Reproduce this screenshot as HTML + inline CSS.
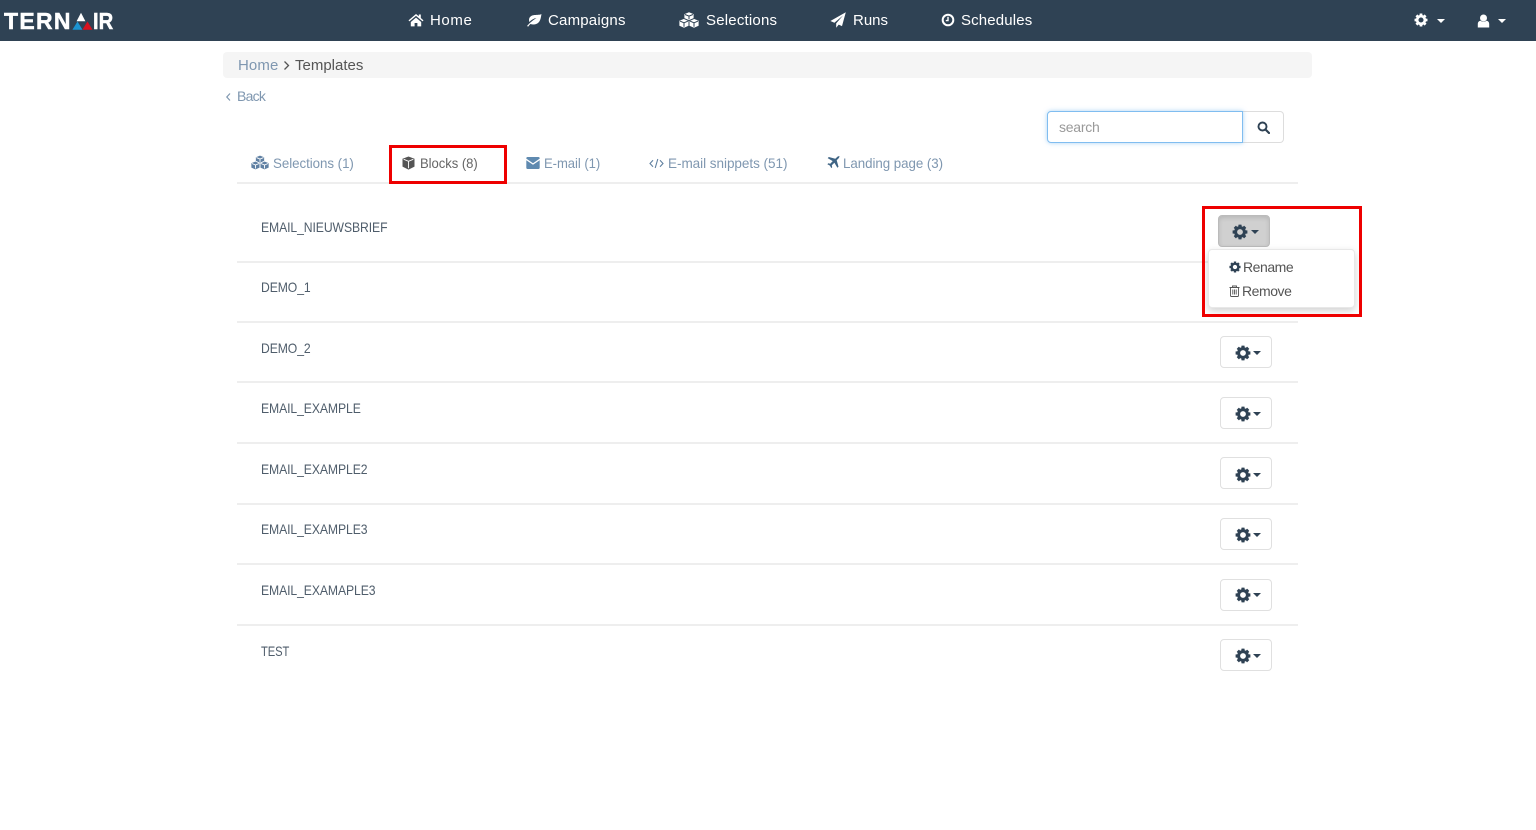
<!DOCTYPE html>
<html lang="en">
<head>
<meta charset="utf-8">
<title>Templates</title>
<style>
*{box-sizing:border-box}
html,body{margin:0;padding:0;width:1536px;height:830px;overflow:hidden;background:#fff}
body{font-family:"Liberation Sans",sans-serif;font-size:14px;color:#555;position:relative}
.t{position:absolute;white-space:nowrap;line-height:20px;transform-origin:0 50%}
.i{position:absolute;display:block}
nav{position:absolute;left:0;top:0;width:1536px;height:41px;background:#2f4254}
.nv{color:#fff;font-size:15px;letter-spacing:.2px;top:10.500px}
.line{position:absolute;left:237px;width:1061px;height:2px;background:#eeeeee}
.row{color:#4f5d6b;font-size:14px;letter-spacing:-.1px;transform:scaleX(.87)}
.btn{position:absolute;width:52px;height:32px;border:1px solid #e0e0e0;border-radius:4px;background:#fff;color:#2f4254}
.car{position:absolute;width:0;height:0;border-left:4px solid transparent;border-right:4px solid transparent;border-top:4px solid currentColor}
.tab{color:#7f97b0;font-size:14px;letter-spacing:-.05px;top:152.500px}
</style>
</head>
<body>
<svg width="0" height="0" style="position:absolute">
<defs>
<symbol id="cog" viewBox="0 0 16 16">
<circle cx="8" cy="8" r="4.400" fill="none" stroke="currentColor" stroke-width="3"/>
<g fill="currentColor">
<rect x="6.400" y="0.600" width="3.200" height="3" rx=".4"/>
<rect x="6.400" y="12.400" width="3.200" height="3" rx=".4"/>
<rect x="0.600" y="6.400" width="3" height="3.200" rx=".4"/>
<rect x="12.400" y="6.400" width="3" height="3.200" rx=".4"/>
<rect x="6.400" y="0.600" width="3.200" height="3" rx=".4" transform="rotate(45 8 8)"/>
<rect x="6.400" y="12.400" width="3.200" height="3" rx=".4" transform="rotate(45 8 8)"/>
<rect x="0.600" y="6.400" width="3" height="3.200" rx=".4" transform="rotate(45 8 8)"/>
<rect x="12.400" y="6.400" width="3" height="3.200" rx=".4" transform="rotate(45 8 8)"/>
</g>
</symbol>
<symbol id="cubes" viewBox="0 0 20 16">
<g fill="currentColor">
<path d="M10 0.300l4.600 1.800v4.700L10 8.700 5.400 6.800V2.100z"/>
<path d="M5 6.900l4.600 1.800v5L5 15.700.4 13.700v-5z"/>
<path d="M15 6.900l4.600 1.800v5L15 15.700l-4.600-2v-5z"/>
</g>
<g style="stroke:var(--b)" stroke-width="1" fill="none">
<path d="M6 2.500L10 4.100l4-1.600M10 4.100v3.200"/>
<path d="M5.200 6.600L10 8.700l4.800-2.100"/>
<path d="M1 9.100L5 10.800l4-1.700M5 10.800v3.900"/>
<path d="M11 9.100l4 1.700 4-1.700M15 10.800v3.900"/>
<path d="M10 8.500v6"/>
</g>
</symbol>
</defs>
</svg>

<nav></nav>

<!-- logo -->
<div class="t" style="left:4px;top:9.500px;font-size:23px;line-height:23px;font-weight:700;color:#fff;letter-spacing:1.300px;-webkit-text-stroke:.5px #fff">TERN</div>
<svg class="i" style="left:72px;top:12px" width="21" height="18" viewBox="0 0 21 18">
<path d="M9 0.800l4.400 8.400H4.600z" fill="#fff"/>
<path d="M5.500 9.500l5 8.200H.4z" fill="#1c93d1"/>
<path d="M15.500 9.500l5 8.200H10.400z" fill="#d8121f"/>
</svg>
<div class="t" style="left:93px;top:9.500px;font-size:23px;line-height:23px;font-weight:700;color:#fff;-webkit-text-stroke:.5px #fff;transform:scaleX(.88)">IR</div>

<!-- nav items -->
<svg class="i" style="left:408px;top:13px" width="16" height="14" viewBox="0 0 16 14"><path fill="#fff" d="M8 1L.5 7.400l.9 1L8 2.900l6.600 5.500.9-1L12.800 5V1.500h-2v1.800zM2.800 9L8 4.600 13.200 9v4.400H9.400V10H6.600v3.400H2.800z"/></svg>
<div class="t nv" style="left:430px;letter-spacing:.6px">Home</div>
<svg class="i" style="left:526px;top:13px" width="16" height="14" viewBox="0 0 16 14"><path fill="#fff" d="M15.500 1c-1.500 1-4 .8-7 1C5 2.300 3 4.300 3 7c0 .8.200 1.400.4 2C5 7 7.500 5.500 10.500 5 8 6.500 4.500 9 1 13l1.200.6C3 12.500 3.700 11.600 4.500 11c3 1 6.500.5 8.500-2 2-2.600 2-6 2.500-8z"/></svg>
<div class="t nv" style="left:548px">Campaigns</div>
<svg class="i" style="left:679px;top:12px;color:#fff;--b:#2f4254" width="20" height="16"><use href="#cubes"/></svg>
<div class="t nv" style="left:706px">Selections</div>
<svg class="i" style="left:830px;top:12px" width="16" height="16" viewBox="0 0 16 16"><path fill="#fff" d="M15.800.2L.4 9l4 1.700L13 3.500 6.200 11.400V15.800l2.500-3.200 3.300 1.500z"/></svg>
<div class="t nv" style="left:853px;letter-spacing:0">Runs</div>
<svg class="i" style="left:941px;top:13px" width="14" height="14" viewBox="0 0 14 14"><circle cx="7" cy="7" r="5.300" fill="none" stroke="#fff" stroke-width="2"/><path d="M7 3.800V7.600H4.800" fill="none" stroke="#fff" stroke-width="1.400"/></svg>
<div class="t nv" style="left:961px;letter-spacing:.15px">Schedules</div>

<svg class="i" style="left:1414px;top:13px;color:#fff" width="14" height="14"><use href="#cog"/></svg>
<span class="car" style="left:1437px;top:19px;color:#fff;border-left-width:4.500px;border-right-width:4.500px"></span>
<svg class="i" style="left:1477px;top:14px" width="13" height="14" viewBox="0 0 13 14"><circle cx="6.500" cy="4" r="3.500" fill="#fff"/><path d="M.8 13.500V10c0-2 1.400-3.200 2.900-3.200.8.700 1.700 1 2.800 1s2-.3 2.800-1c1.500 0 2.900 1.200 2.900 3.200v3.500z" fill="#fff"/></svg>
<span class="car" style="left:1498px;top:19px;color:#fff;border-left-width:4.500px;border-right-width:4.500px"></span>

<!-- breadcrumb -->
<div style="position:absolute;left:223px;top:52px;width:1089px;height:26px;background:#f5f5f5;border-radius:4px"></div>
<div class="t" style="left:238px;top:56px;font-size:15px;letter-spacing:.1px;color:#7f97b0">Home</div>
<svg class="i" style="left:283px;top:60px" width="7" height="11" viewBox="0 0 7 11"><path d="M1.500 1.500L5.500 5.500 1.500 9.500" fill="none" stroke="#555" stroke-width="1.300"/></svg>
<div class="t" style="left:295px;top:56px;font-size:15px;color:#555">Templates</div>

<!-- back -->
<svg class="i" style="left:225px;top:92px" width="7" height="10" viewBox="0 0 7 10"><path d="M5 1.500L1.800 5 5 8.500" fill="none" stroke="#7f97b0" stroke-width="1.200"/></svg>
<div class="t" style="left:237px;top:86px;color:#7f97b0;font-size:14px;letter-spacing:-.75px">Back</div>

<!-- search -->
<div style="position:absolute;left:1243px;top:111px;width:41px;height:32px;border:1px solid #ddd;border-left:0;border-radius:0 4px 4px 0;background:#fff"></div>
<div style="position:absolute;left:1047px;top:111px;width:196px;height:32px;border:1px solid #80bdf0;border-radius:4px 0 0 4px;box-shadow:0 0 5px rgba(102,175,233,.55);background:#fff"></div>
<div class="t" style="left:1059px;top:117px;color:#999;font-size:14px;letter-spacing:-.25px">search</div>
<svg class="i" style="left:1257px;top:121px" width="13" height="13" viewBox="0 0 13 13"><circle cx="5.500" cy="5.500" r="4" fill="none" stroke="#2f4254" stroke-width="1.900"/><path d="M8.500 8.500L12 12" stroke="#2f4254" stroke-width="2.200" stroke-linecap="round"/></svg>

<!-- tabs -->
<div class="line" style="top:182px"></div>
<svg class="i" style="left:251px;top:155px;color:#5f80a3;--b:#fff" width="18" height="15"><use href="#cubes"/></svg>
<div class="t tab" style="left:273px;transform:scaleX(.952)">Selections (1)</div>

<svg class="i" style="left:402px;top:156px" width="13" height="14" viewBox="0 0 13 14"><path fill="#555" d="M6.500.5l6 2.300v7.800l-6 3-6-3V2.800z"/><path d="M1.700 3.300l4.800 2 4.800-2M6.500 5.300v7" stroke="#fff" stroke-width=".9" fill="none"/></svg>
<div class="t tab" style="left:420px;color:#666;transform:scaleX(.935)">Blocks (8)</div>
<div style="position:absolute;left:389px;top:145px;width:118px;height:39px;border:3px solid #ee0000"></div>

<svg class="i" style="left:526px;top:157px" width="14" height="12" viewBox="0 0 14 12"><path fill="#5f8ab0" d="M.3 1.200C.3.500.8 0 1.500 0h11c.7 0 1.200.5 1.200 1.200v.4L7 6.200.3 1.600zM.3 3.200L7 7.800l6.700-4.600v7.600c0 .7-.5 1.200-1.200 1.200h-11c-.7 0-1.200-.5-1.200-1.200z"/></svg>
<div class="t tab" style="left:544px;transform:scaleX(.933)">E-mail (1)</div>

<svg class="i" style="left:649px;top:158px" width="15" height="11" viewBox="0 0 15 11"><path d="M4 2.200L1 5.500l3 3.300M11 2.200l3 3.300-3 3.300M8.800 1L6.200 10" fill="none" stroke="#5f7f9f" stroke-width="1.100"/></svg>
<div class="t tab" style="left:668px;transform:scaleX(.967)">E-mail snippets (51)</div>

<svg class="i" style="left:827px;top:156px" width="13" height="13" viewBox="0 0 13 13"><path fill="#3f6484" d="M12.700.3c-.6-.5-1.800-.1-2.800.9L8.300 2.800 1.800 1 .7 2.100l5 3L3.200 7.700 1.300 7.300.4 8.200l2.500 1.400 1.400 2.500.9-.9-.4-1.900 2.600-2.500 3 5 1.100-1.100-1.800-6.500 1.600-1.600c1-1 1.400-2.200.9-2.800z"/></svg>
<div class="t tab" style="left:843px;transform:scaleX(.952)">Landing page (3)</div>

<!-- rows -->
<div class="t row" style="left:260.500px;top:217px">EMAIL_NIEUWSBRIEF</div>
<div class="line" style="top:261px"></div>
<div class="t row" style="left:260.500px;top:277px">DEMO_1</div>
<div class="line" style="top:321px"></div>
<div class="t row" style="left:260.500px;top:338px">DEMO_2</div>
<div class="line" style="top:381px"></div>
<div class="t row" style="left:260.500px;top:398px">EMAIL_EXAMPLE</div>
<div class="line" style="top:442px"></div>
<div class="t row" style="left:260.500px;top:459px">EMAIL_EXAMPLE2</div>
<div class="line" style="top:503px"></div>
<div class="t row" style="left:260.500px;top:519px">EMAIL_EXAMPLE3</div>
<div class="line" style="top:563px"></div>
<div class="t row" style="left:260.500px;top:580px">EMAIL_EXAMAPLE3</div>
<div class="line" style="top:624px"></div>
<div class="t row" style="left:260.500px;top:641px;transform:scaleX(.8)">TEST</div>

<!-- buttons -->
<div class="btn" style="left:1218px;top:215px;background:#d0d0d0;border-color:#bbb;box-shadow:inset 0 2px 4px rgba(0,0,0,.12)">
<svg class="i" style="left:13px;top:8px" width="16" height="16"><use href="#cog"/></svg><span class="car" style="left:32px;top:14px"></span></div>
<div class="btn" style="left:1220px;top:336px"><svg class="i" style="left:14px;top:8px" width="16" height="16"><use href="#cog"/></svg><span class="car" style="left:32px;top:14px"></span></div>
<div class="btn" style="left:1220px;top:397px"><svg class="i" style="left:14px;top:8px" width="16" height="16"><use href="#cog"/></svg><span class="car" style="left:32px;top:14px"></span></div>
<div class="btn" style="left:1220px;top:457px"><svg class="i" style="left:14px;top:9px" width="16" height="16"><use href="#cog"/></svg><span class="car" style="left:32px;top:15px"></span></div>
<div class="btn" style="left:1220px;top:518px"><svg class="i" style="left:14px;top:8px" width="16" height="16"><use href="#cog"/></svg><span class="car" style="left:32px;top:14px"></span></div>
<div class="btn" style="left:1220px;top:579px"><svg class="i" style="left:14px;top:7px" width="16" height="16"><use href="#cog"/></svg><span class="car" style="left:32px;top:13px"></span></div>
<div class="btn" style="left:1220px;top:639px"><svg class="i" style="left:14px;top:8px" width="16" height="16"><use href="#cog"/></svg><span class="car" style="left:32px;top:14px"></span></div>

<!-- dropdown -->
<div style="position:absolute;left:1208px;top:249px;width:147px;height:59px;background:#fff;border:1px solid #e8e8e8;border-radius:4px;box-shadow:0 3px 8px rgba(0,0,0,.18)"></div>
<svg class="i" style="left:1229px;top:261px;color:#2f4254" width="12" height="12"><use href="#cog"/></svg>
<div class="t" style="left:1243px;top:257px;color:#555;font-size:14px;letter-spacing:-.45px">Rename</div>
<svg class="i" style="left:1229px;top:285px" width="11" height="12" viewBox="0 0 11 12"><path d="M1.500 3v7.500c0 .6.400 1 1 1h6c.6 0 1-.4 1-1V3M.5 2.500h10M3.500 2.500V1h4v1.500M3.800 4.500v5M5.500 4.500v5M7.200 4.500v5" fill="none" stroke="#555" stroke-width=".9"/></svg>
<div class="t" style="left:1242px;top:281px;color:#555;font-size:14px;letter-spacing:-.45px">Remove</div>

<div style="position:absolute;left:1202px;top:206px;width:160px;height:111px;border:3px solid #ee0000"></div>
</body>
</html>
